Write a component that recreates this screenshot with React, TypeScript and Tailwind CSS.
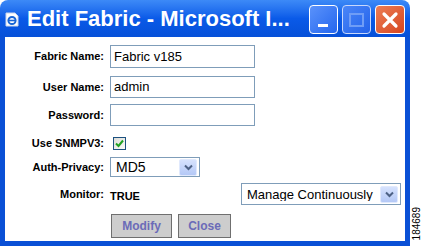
import React from 'react';

const font = { fontFamily: '"Liberation Sans", Arial, sans-serif' };

const Chevron: React.FC = () => (
  <svg width="9" height="7" viewBox="0 0 9 7">
    <path d="M1 1.5 L4.5 5 L8 1.5" fill="none" stroke="#4d6185" strokeWidth="2" />
  </svg>
);

const SelectBox: React.FC<{ value: string; width: string; text: string }> = ({ value, width, text }) => (
  <div className={`${width} h-full flex items-center border border-[#7f9db9] bg-white pl-[5px] pr-[2px]`}>
    <span className={`flex-1 ${text} text-black leading-none whitespace-nowrap overflow-hidden`}>{value}</span>
    <div className="shrink-0 w-[18px] h-[17px] rounded-[2px] border border-[#e0e9fd] bg-gradient-to-b from-[#d6e2fd] to-[#b4c8f6] flex items-center justify-center">
      <Chevron />
    </div>
  </div>
);

const Label: React.FC<{ children: React.ReactNode }> = ({ children }) => (
  <div className="w-[99px] text-right text-[11px] font-bold text-black">{children}</div>
);

const App: React.FC = () => {
  return (
    <div className="w-[423px] h-[246px] flex bg-white overflow-hidden" style={font}>
      <div className="w-[410px] h-full flex flex-col">
        {/* Title bar */}
        <div className="h-[37px] rounded-t-[8px] bg-gradient-to-b from-[#3d8af7] via-[#0a5ae8] to-[#0650d8] flex items-center pl-[5px] pr-[5px]">
          <svg width="14" height="15" viewBox="0 0 14 15" className="mt-[1px]">
            <path d="M1 1 H10 L13 4 V14 H1 Z" fill="#fff" stroke="#c8d4ec" />
            <circle cx="7" cy="8.5" r="3.6" fill="none" stroke="#1a66d6" strokeWidth="2" />
            <path d="M3.5 8.5 H10.5" stroke="#1a66d6" strokeWidth="1.6" />
          </svg>
          <div className="ml-[8px] text-white font-bold text-[22px] leading-none whitespace-nowrap">
            Edit Fabric - Microsoft I...
          </div>
          <div className="ml-auto flex items-center gap-[4px] mt-[2px]">
            <div className="w-[29px] h-[29px] rounded-[4px] border border-white bg-gradient-to-br from-[#5a92fb] to-[#2466ee] flex items-end pl-[8px] pb-[6px]">
              <div className="w-[10px] h-[3px] bg-white" />
            </div>
            <div className="w-[29px] h-[29px] rounded-[4px] border border-[#c8d8fc] bg-gradient-to-br from-[#4a86f8] to-[#2362ea] flex items-center justify-center">
              <div className="w-[15px] h-[14px] border-[2px] border-[#6f9df6]" />
            </div>
            <div className="w-[30px] h-[29px] rounded-[4px] border border-white bg-gradient-to-br from-[#ec7d55] to-[#d6441c] flex items-center justify-center">
              <svg width="18" height="18" viewBox="0 0 18 18">
                <path d="M3 3 L15 15 M15 3 L3 15" stroke="#fff" strokeWidth="3.2" strokeLinecap="round" />
              </svg>
            </div>
          </div>
        </div>

        {/* Body */}
        <div className="flex-1 flex flex-col border-x-[5px] border-b-[5px] border-[#0a50d6] bg-white">
          <div className="flex items-center h-[23px] mt-[8px] gap-[6px]">
            <Label>Fabric Name:</Label>
            <div className="w-[145px] h-full border border-[#7f9db9] flex items-center pl-[3px] text-[13px]">Fabric v185</div>
          </div>
          <div className="flex items-center h-[22px] mt-[8px] gap-[6px]">
            <Label>User Name:</Label>
            <div className="w-[145px] h-full border border-[#7f9db9] flex items-center pl-[3px] text-[13px]">admin</div>
          </div>
          <div className="flex items-center h-[22px] mt-[6px] gap-[6px]">
            <Label>Password:</Label>
            <div className="w-[145px] h-full border border-[#7f9db9]" />
          </div>
          <div className="flex items-center h-[18px] mt-[8px] gap-[6px]">
            <Label>Use SNMPV3:</Label>
            <div className="ml-[3px] w-[13px] h-[13px] border border-[#1c5180] bg-gradient-to-br from-[#dcdcd7] to-[#fbfbf9] flex items-center justify-center">
              <svg width="9" height="9" viewBox="0 0 9 9">
                <path d="M1 4.5 L3.5 7 L8 1.5" fill="none" stroke="#21a121" strokeWidth="2" />
              </svg>
            </div>
          </div>
          <div className="flex items-center h-[20px] mt-[5px] gap-[6px]">
            <Label>Auth-Privacy:</Label>
            <SelectBox value="MD5" width="w-[90px]" text="text-[14px]" />
          </div>
          <div className="flex items-center h-[22px] mt-[6px] gap-[6px]">
            <Label>Monitor:</Label>
            <div className="text-[11px] font-bold mt-[4px]">TRUE</div>
            <div className="ml-auto mr-[4px] h-full">
              <SelectBox value="Manage Continuously" width="w-[160px]" text="text-[13px]" />
            </div>
          </div>
          <div className="flex items-center h-[24px] mt-[9px] pl-[106px] gap-[6px]">
            <div className="w-[61px] h-full border border-[#6f6f6f] bg-[#cdcdcd] flex items-center justify-center text-[12px] font-bold text-[#6b6bb8]">Modify</div>
            <div className="w-[53px] h-full border border-[#6f6f6f] bg-[#cdcdcd] flex items-center justify-center text-[12px] font-bold text-[#6b6bb8]">Close</div>
          </div>
        </div>
      </div>

      {/* Figure number strip */}
      <div className="flex-1 flex items-end justify-center pb-[6px]">
        <div className="[writing-mode:vertical-rl] rotate-180 text-[10px] leading-none text-black">184689</div>
      </div>
    </div>
  );
};

export default App;
